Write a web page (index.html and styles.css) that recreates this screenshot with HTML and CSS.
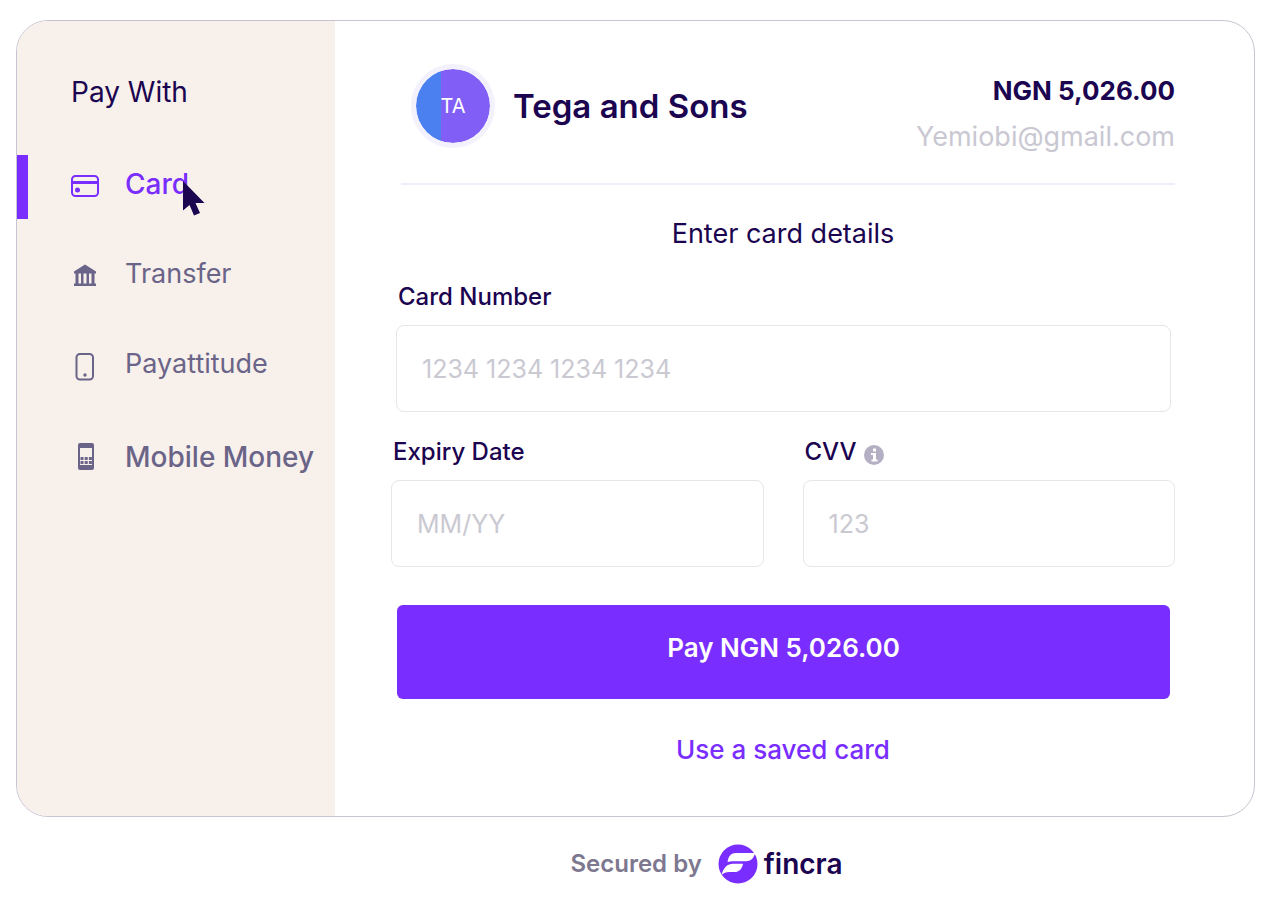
FILE: index.html
```html
<!DOCTYPE html>
<html lang="en">
<head>
<meta charset="utf-8">
<meta name="viewport" content="width=device-width, initial-scale=1">
<title>Checkout</title>
<link rel="stylesheet" href="styles.css">
</head>
<body>
<div class="checkout">
  <aside class="sidebar">
    <h2 class="sidebar-title">Pay With</h2>
    <nav class="methods">
      <button type="button" class="method method-active">
        <svg class="method-icon" viewBox="0 0 28 28" fill="none" stroke="currentColor" stroke-width="2"><rect x="1" y="3" width="26" height="20" rx="3.5"/><path d="M1 9.500h26" stroke-width="3"/><circle cx="6.500" cy="17" r="2.500" fill="currentColor" stroke="none"/></svg>
        <span class="method-label">Card</span>
        <svg class="cursor" viewBox="0 0 22 35" fill="#1b0450"><path d="M0 0V29.500L6.500 24l4.500 10.500 6-2.500-4.500-10H21.500z"/></svg>
      </button>
      <button type="button" class="method">
        <svg class="method-icon" viewBox="0 0 28 28" fill="currentColor"><path d="M14 1.500L25 8.500v2H3v-2zM4.500 10h3v11h-3zM10 10h2.500v11H10zM15.500 10H18v11h-2.500zM20.500 10h3v11h-3zM3 20.500h22V23H3z"/></svg>
        <span class="method-label">Transfer</span>
      </button>
      <button type="button" class="method">
        <svg class="method-icon" viewBox="0 0 28 28" fill="none" stroke="currentColor" stroke-width="2"><rect x="5.500" y="1" width="16.500" height="25.500" rx="3.500"/><circle cx="14" cy="22" r="1.700" fill="currentColor" stroke="none"/></svg>
        <span class="method-label">Payattitude</span>
      </button>
      <button type="button" class="method method-strong">
        <svg class="method-icon" viewBox="0 0 28 28" fill="currentColor"><path fill-rule="evenodd" d="M9 0h12a2 2 0 0 1 2 2v23a2 2 0 0 1-2 2H9a2 2 0 0 1-2-2V2a2 2 0 0 1 2-2zM9 5v17h12V5z"/><path d="M9.500 14h3v3h-3zM13.700 14h3v3h-3zM17.900 14h3v3h-3zM9.500 18h3v3h-3zM13.700 18h3v3h-3zM17.900 18h3v3h-3z"/></svg>
        <span class="method-label">Mobile Money</span>
      </button>
    </nav>
  </aside>
  <main class="payment">
    <header class="merchant">
      <div class="avatar">TA</div>
      <h1 class="merchant-name">Tega and Sons</h1>
      <div class="summary">
        <div class="amount">NGN 5,026.00</div>
        <div class="email">Yemiobi@gmail.com</div>
      </div>
    </header>
    <form class="form">
      <p class="form-title">Enter card details</p>
      <div class="field field-number">
        <label class="label" for="number">Card Number</label>
        <input class="input" id="number" type="text" placeholder="1234 1234 1234 1234">
      </div>
      <div class="field-row">
        <div class="field">
          <label class="label" for="expiry">Expiry Date</label>
          <input class="input" id="expiry" type="text" placeholder="MM/YY">
        </div>
        <div class="field">
          <label class="label" for="cvv">CVV
            <svg class="info" viewBox="0 0 20 20"><circle cx="10" cy="10" r="10" fill="#b5afc3"/><path d="M9 3.500h3v3H9zM7 8h5v6.500h1.500V16.500H7.500V14.500H9V10H7z" fill="#fff"/></svg>
          </label>
          <input class="input" id="cvv" type="text" placeholder="123">
        </div>
      </div>
      <button type="button" class="pay">Pay NGN 5,026.00</button>
      <a class="saved" href="#">Use a saved card</a>
    </form>
  </main>
</div>
<footer class="footer">
  <span class="secured">Secured by</span>
  <svg class="logo" viewBox="0 0 40 40"><circle cx="20" cy="20" r="19.500" fill="#792dff"/><path d="M9.500 18C10.500 12 13 9 18 9H37C36 14.500 32.500 17.200 28 17.200H16C13 17.200 11 17.500 9.500 18zM3.500 31C5.500 23.500 9.500 19.700 15 19.700H25C24 25 21 28 16.500 28H11.500C8 28 5.500 29 3.500 31z" fill="#fff"/></svg>
  <span class="brand">fincra</span>
</footer>
</body>
</html>
```
FILE: styles.css
```css
* {
  box-sizing: border-box;
}

body {
  margin: 0;
  padding: 20px 16px 0;
  background: #fff;
  color: #1b0450;
  font-family: Inter, "Liberation Sans", sans-serif;
  font-size: 28px;
  line-height: 36px;
}

h1, h2, p {
  margin: 0;
  font-weight: 400;
}

button, input {
  font: inherit;
}

.checkout {
  display: flex;
  border: 1px solid #c6c4d0;
  border-radius: 32px;
  overflow: hidden;
}

.sidebar {
  flex: 0 0 318px;
  padding-top: 53px;
  background: #f8f0eb;
}

.sidebar-title {
  padding-left: 54px;
  font-size: 28px;
}

.methods {
  display: flex;
  flex-direction: column;
  gap: 26px;
  margin-top: 45px;
}

.method {
  position: relative;
  display: flex;
  align-items: center;
  gap: 26px;
  height: 64px;
  padding: 0 0 0 54px;
  border: 0;
  background: none;
  color: #6a6488;
  font-size: 27px;
  white-space: nowrap;
}

.method-icon {
  flex: none;
  width: 28px;
  height: 28px;
}

.method-label {
  padding-bottom: 6px;
}

.method-active {
  padding-left: 43px;
  border-left: 11px solid #792dff;
  color: #792dff;
  font-size: 28px;
  font-weight: 500;
}

.method-strong {
  font-size: 28px;
  font-weight: 500;
}

.method-strong .method-label {
  padding-bottom: 0;
}

.cursor {
  position: absolute;
  top: 26px;
  left: 155px;
  width: 22px;
  height: 35px;
}

.payment {
  flex: 1;
  padding: 43px 79px 48px 56px;
}

.merchant {
  display: flex;
  align-items: center;
  gap: 18px;
  height: 121px;
  margin-left: 10px;
  padding: 0 0 36px 10px;
  border-bottom: 2px solid #f1ebfe;
}

.avatar {
  display: flex;
  flex: none;
  align-items: center;
  justify-content: center;
  width: 84px;
  height: 84px;
  border: 5px solid #f3f1fc;
  border-radius: 50%;
  background: linear-gradient(90deg, #4a80f0 25px, #815ef6 25px) padding-box;
  color: #fff;
  font-size: 20px;
}

.merchant-name {
  font-size: 33px;
  font-weight: 600;
  white-space: nowrap;
}

.summary {
  margin-left: auto;
  padding-top: 16px;
  line-height: 46px;
  text-align: right;
}

.amount {
  font-size: 26px;
  font-weight: 700;
}

.email {
  color: #c9c8d2;
  font-size: 27px;
}

.form {
  display: flex;
  flex-direction: column;
  padding-top: 31px;
}

.form-title {
  font-size: 27px;
  text-align: center;
}

.field {
  display: flex;
  flex-direction: column;
  gap: 10px;
}

.field-number {
  margin: 27px 4px 0 5px;
}

.field-row {
  display: grid;
  grid-template-columns: 1fr 1fr;
  gap: 39px;
  margin-top: 22px;
}

.label {
  display: flex;
  align-items: center;
  gap: 8px;
  padding-left: 2px;
  font-size: 24px;
  font-weight: 500;
}

.info {
  width: 20px;
  height: 20px;
  margin-top: 6px;
}

.input {
  width: 100%;
  height: 87px;
  padding: 0 25px;
  border: 1px solid #e6e5e8;
  border-radius: 8px;
  background: #fff;
  color: #1b0450;
  font-size: 25px;
}

.input::placeholder {
  color: #cac9d2;
  opacity: 1;
}

.pay {
  height: 94px;
  margin: 38px 5px 0 6px;
  padding: 0 0 8px;
  border: 0;
  border-radius: 6px;
  background: #792dff;
  color: #fff;
  font-size: 26px;
  font-weight: 600;
}

.saved {
  align-self: center;
  margin-top: 33px;
  color: #792dff;
  font-size: 26px;
  font-weight: 500;
  text-decoration: none;
}

.footer {
  display: flex;
  align-items: center;
  justify-content: center;
  margin-top: 27px;
  padding-left: 142px;
}

.secured {
  color: #7d7890;
  font-size: 24px;
  font-weight: 600;
}

.logo {
  width: 40px;
  height: 40px;
  margin: 0 6px 0 16px;
}

.brand {
  font-weight: 600;
}
```
